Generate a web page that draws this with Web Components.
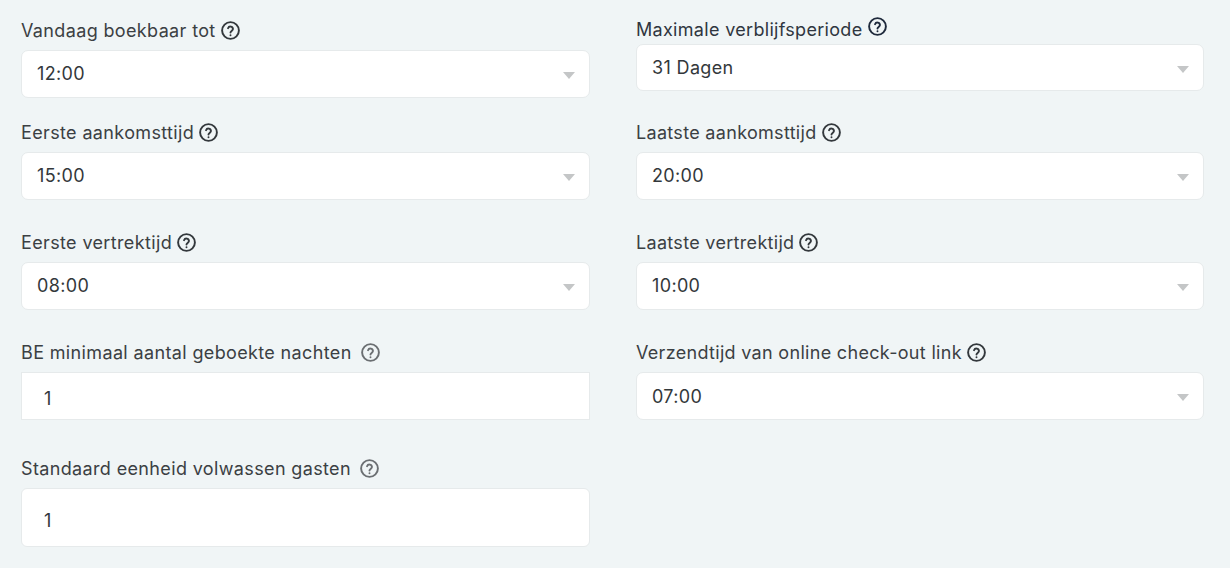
<!DOCTYPE html>
<html lang="nl"><head><meta charset="utf-8"><title>Instellingen</title>
<style>
html,body{margin:0;background:#f0f5f6}
body{width:1230px;height:568px;overflow:hidden;font-family:Inter,"Liberation Sans",sans-serif}
</style></head><body>
<template id="tip"><style>
:host{display:inline-flex;color:var(--tip,#33383c);transform:translateY(var(--ty,0))}
svg{display:block;width:21px;height:21px}
</style><svg viewBox="0 0 24 24" fill="none" stroke="currentColor" stroke-width="2.2" stroke-linecap="round" stroke-linejoin="round"><circle cx="12" cy="12" r="9.6"/><path d="M9.2 9.4a2.9 2.9 0 0 1 5.6.9c0 1.9-2.8 2.4-2.8 3.9"/><circle cx="12" cy="17.4" r=".5" fill="currentColor" stroke-width="1.2"/></svg></template>

<template id="field"><style>
:host{display:flex;flex-direction:column;gap:var(--gap,10px);margin-top:var(--top,0);width:var(--w,569px);color:#3b4043}
.l{display:flex;align-items:center;gap:var(--lg,4px);height:20px;font-size:18px;line-height:20px;letter-spacing:var(--ls,.36px);color:var(--lc,#3b4043)}
::slotted(span){padding-top:2px}
</style><div class="l"><slot name="label"></slot><h-tip></h-tip></div><slot></slot></template>

<template id="sel"><style>
:host{display:flex;align-items:center;justify-content:space-between;box-sizing:border-box;height:var(--h,48px);background:#fff;border:1px solid #e6eaeb;border-radius:7px;padding:0 14px 0 15px;font-size:18px;letter-spacing:.35px;color:#33383b}
span{display:block;margin-top:var(--mt,-1px)}
i{display:block;width:0;height:0;border:6.5px solid transparent;border-top:7px solid #c4c6c7;border-bottom:0;margin-top:3px}
</style><span><slot></slot></span><i></i></template>

<template id="inp"><style>
:host{display:flex;align-items:center;box-sizing:border-box;height:var(--h,48px);background:#fff;border:1px solid #e6eaeb;border-radius:var(--r,0);padding:var(--pt,4px) 22px 0;font-size:18px;color:#33383b}
</style><slot></slot></template>

<template id="page"><style>
:host{display:flex;gap:46px;padding-left:21px;align-items:flex-start}
.c{display:flex;flex-direction:column}
</style><div class="c"><slot name="left"></slot></div><div class="c" style="--ls:.31px"><slot name="right"></slot></div></template>

<h-page>
<div slot="left" style="display:contents">
<h-field style="--top:20px"><span slot="label">Vandaag boekbaar tot</span><h-sel>12:00</h-sel></h-field>
<h-field style="--top:24px"><span slot="label">Eerste aankomsttijd</span><h-sel>15:00</h-sel></h-field>
<h-field style="--top:32px"><span slot="label">Eerste vertrektijd</span><h-sel>08:00</h-sel></h-field>
<h-field style="--top:32px;--lg:8px;--tip:#6b6f72"><span slot="label">BE minimaal aantal geboekte nachten</span><h-inp>1</h-inp></h-field>
<h-field style="--top:38px;--lg:8px;--tip:#6b6f72"><span slot="label">Standaard eenheid volwassen gasten</span><h-inp style="--h:59px;--r:6px;--pt:6px">1</h-inp></h-field>
</div>
<div slot="right" style="display:contents">
<h-field style="--top:19px;--gap:5px;--w:568px;--lc:#2f3640;--tip:#1f2a3c;--ty:-3px"><span slot="label">Maximale verblijfsperiode</span><h-sel style="--h:47px">31 Dagen</h-sel></h-field>
<h-field style="--top:31px;--w:568px"><span slot="label">Laatste aankomsttijd</span><h-sel>20:00</h-sel></h-field>
<h-field style="--top:32px;--w:568px"><span slot="label">Laatste vertrektijd</span><h-sel>10:00</h-sel></h-field>
<h-field style="--top:32px;--w:568px"><span slot="label">Verzendtijd van online check-out link</span><h-sel style="--mt:0px">07:00</h-sel></h-field>
</div>
</h-page>
<script>
for (const [tag,id] of [['h-tip','tip'],['h-field','field'],['h-sel','sel'],['h-inp','inp'],['h-page','page']]) {
  customElements.define(tag, class extends HTMLElement {
    constructor(){super();this.attachShadow({mode:'open'}).append(document.getElementById(id).content.cloneNode(true));}
  });
}
</script>
</body></html>
